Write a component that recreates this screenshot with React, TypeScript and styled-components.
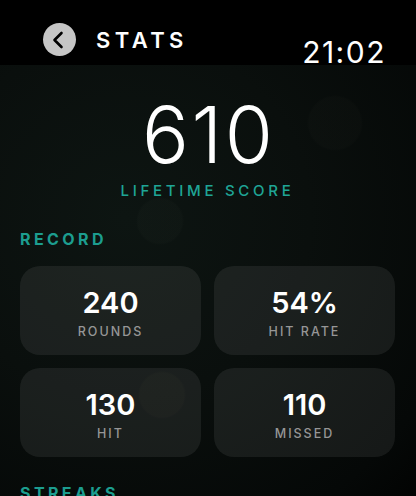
import React from "react";
import styled, { createGlobalStyle } from "styled-components";

type Stat = {
  value: string;
  label: string;
};

const record: Stat[] = [
  { value: "240", label: "ROUNDS" },
  { value: "54%", label: "HIT RATE" },
  { value: "130", label: "HIT" },
  { value: "110", label: "MISSED" },
];

function BackButton() {
  return (
    <RoundButton aria-label="Back">
      <svg width="33" height="33" viewBox="0 0 33 33">
        <path
          d="M18.5 10 L11.5 17 L18.5 24"
          fill="none"
          stroke="#000"
          strokeWidth="2.6"
          strokeLinecap="round"
          strokeLinejoin="round"
        />
      </svg>
    </RoundButton>
  );
}

function StatCard({ value, label }: Stat) {
  return (
    <Card>
      <CardValue>{value}</CardValue>
      <CardLabel>{label}</CardLabel>
    </Card>
  );
}

export default function App() {
  return (
    <>
      <GlobalStyle />
      <Screen>
        <Header>
          <BackButton />
          <Title>STATS</Title>
          <Clock>21:02</Clock>
        </Header>
        <Body>
          <Score>610</Score>
          <ScoreLabel>LIFETIME SCORE</ScoreLabel>
          <SectionTitle>RECORD</SectionTitle>
          <Grid>
            {record.map((s) => (
              <StatCard key={s.label} value={s.value} label={s.label} />
            ))}
          </Grid>
          <SectionTitle $gap={28}>STREAKS</SectionTitle>
        </Body>
      </Screen>
    </>
  );
}

const GlobalStyle = createGlobalStyle`
  html, body {
    margin: 0;
    padding: 0;
    background: #000;
  }
  body {
    font-family: Inter, "Noto Sans", sans-serif;
    -webkit-font-smoothing: antialiased;
  }
`;

const Screen = styled.div`
  width: 416px;
  height: 496px;
  overflow: hidden;
  display: flex;
  flex-direction: column;
  background: #000;
`;

const Header = styled.div`
  height: 65px;
  flex-shrink: 0;
  box-sizing: border-box;
  display: flex;
  align-items: flex-start;
  padding: 23px 30px 0 43px;
  background: #000;
`;

const RoundButton = styled.div`
  width: 33px;
  height: 33px;
  border-radius: 50%;
  background: #c6c6c6;
  display: flex;
  flex-shrink: 0;

  svg {
    display: block;
  }
`;

const Title = styled.div`
  margin: 6px 0 0 20px;
  font-size: 22px;
  line-height: 1;
  font-weight: 600;
  letter-spacing: 4.4px;
  color: #fff;
`;

const Clock = styled.div`
  margin: 14px 0 0 auto;
  font-size: 30px;
  line-height: 1;
  font-weight: 400;
  letter-spacing: 1.5px;
  color: #fff;
`;

/* dark backdrop with a few soft out-of-focus dots */
const Body = styled.div`
  flex: 1;
  display: flex;
  flex-direction: column;
  padding: 0 21px 0 20px;
  background:
    radial-gradient(circle at 160px 156px, rgba(60, 70, 60, 0.07) 0 22px, transparent 24px),
    radial-gradient(circle at 162px 330px, rgba(70, 70, 55, 0.07) 0 22px, transparent 24px),
    radial-gradient(circle at 335px 58px, rgba(70, 70, 60, 0.05) 0 26px, transparent 28px),
    radial-gradient(ellipse at 30% 35%, #0d1512 0%, #0a0f0d 45%, #050807 85%, #020302 100%);
`;

const Score = styled.div`
  margin-top: 31px;
  align-self: center;
  font-size: 78px;
  line-height: 1;
  font-weight: 300;
  letter-spacing: 2.5px;
  padding-left: 2.5px;
  color: #fff;
`;

const ScoreLabel = styled.div`
  margin-top: 9px;
  align-self: center;
  font-size: 15px;
  line-height: 1;
  font-weight: 500;
  letter-spacing: 3.7px;
  color: #1fa596;
`;

const SectionTitle = styled.div<{ $gap?: number }>`
  margin-top: ${(p) => p.$gap ?? 33}px;
  font-size: 16px;
  line-height: 1;
  font-weight: 700;
  letter-spacing: 3.4px;
  color: #1c9d8f;
`;

const Grid = styled.div`
  margin-top: 19px;
  display: grid;
  grid-template-columns: 181px 181px;
  grid-auto-rows: 89px;
  gap: 13px;
`;

const Card = styled.div`
  box-sizing: border-box;
  border-radius: 20px;
  background: rgba(255, 255, 255, 0.07);
  display: flex;
  flex-direction: column;
  align-items: center;
  padding-top: 22px;
`;

const CardValue = styled.div`
  font-size: 29px;
  line-height: 1;
  font-weight: 600;
  color: #fff;
`;

const CardLabel = styled.div`
  margin-top: 9px;
  font-size: 12.5px;
  line-height: 1;
  font-weight: 500;
  letter-spacing: 2px;
  color: #969696;
`;
